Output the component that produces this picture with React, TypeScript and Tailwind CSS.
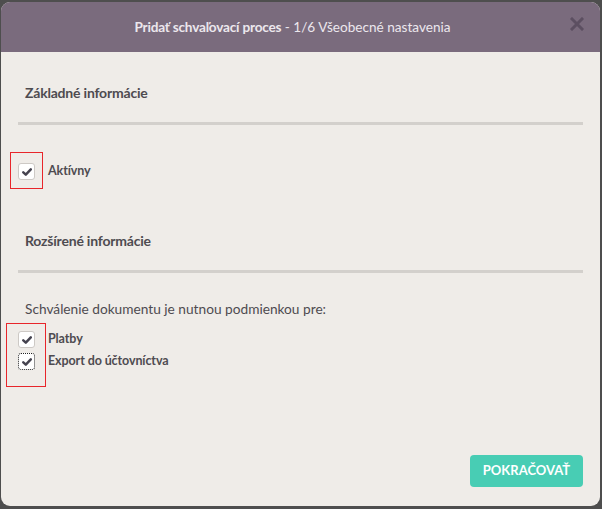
import React from "react";

function Check({ focused = false }: { focused?: boolean }) {
  return (
    <div
      className={
        "w-[17px] h-[17px] bg-white rounded-[3px] flex items-center justify-center shrink-0 " +
        (focused ? "border border-dotted border-[#222]" : "border border-[#cdc9c5]")
      }
    >
      <svg width="10" height="8" viewBox="0 0 10 8">
        <path d="M1.3 4.3 L3.8 6.6 L8.8 1.4" fill="none" stroke="#45434f" strokeWidth="2.5" strokeLinecap="round" strokeLinejoin="round" />
      </svg>
    </div>
  );
}

export default function App() {
  const font = { fontFamily: "Lato, 'Noto Sans', sans-serif" };
  return (
    <div className="w-[602px] h-[509px] bg-[#4e4e4e] pt-[2px] pl-[1px] pr-[2px] pb-[3px]" style={font}>
      <div className="w-full h-full rounded-[9px] overflow-hidden bg-[#efece8] flex flex-col">
        <div className="h-[50px] bg-[#7a6b7d] flex items-center justify-center relative shrink-0 pr-[16px]">
          <div className="text-[13.6px] text-[#ece7ed] leading-[20px]">
            <span className="font-bold tracking-[-0.2px]">Pridať schvaľovací proces</span>
            <span> - 1/6 Všeobecné nastavenia</span>
          </div>
          <div className="absolute right-[16px] top-[15px] text-[#5c4f61]">
            <svg width="14" height="14" viewBox="0 0 14 14">
              <path d="M2 2 L12 12 M12 2 L2 12" stroke="#5c4f61" strokeWidth="3" strokeLinecap="square" />
            </svg>
          </div>
        </div>
        <div className="flex-1 flex flex-col px-[17px] text-[#4e4b50]">
          <div className="mt-[31px] pl-[7px] h-[20px] leading-[20px] text-[14px] font-bold tracking-[-0.2px]">Základné informácie</div>
          <div className="mt-[19px] h-[3px] bg-[#d3d0cc]" />
          <div className="relative mt-[38px] flex items-center h-[17px]">
            <div className="absolute left-[-8px] top-[-11px] w-[33px] h-[37px] border border-[#e8262b]" />
            <Check />
            <span className="ml-[13px] text-[12.5px] font-bold tracking-[-0.1px]">Aktívny</span>
          </div>
          <div className="mt-[51px] pl-[7px] h-[20px] leading-[20px] text-[14px] font-bold tracking-[-0.2px]">Rozšírené informácie</div>
          <div className="mt-[19px] h-[3px] bg-[#d3d0cc]" />
          <div className="mt-[26px] pl-[7px] h-[20px] leading-[20px] text-[13.7px]">Schválenie dokumentu je nutnou podmienkou pre:</div>
          <div className="relative mt-[12px] flex flex-col gap-[5px]">
            <div className="absolute left-[-12px] top-[-8px] w-[40px] h-[64px] border border-[#e8262b]" />
            <div className="flex items-center h-[17px]">
              <Check />
              <span className="ml-[13px] text-[12.5px] font-bold tracking-[-0.1px]">Platby</span>
            </div>
            <div className="flex items-center h-[17px]">
              <Check focused />
              <span className="ml-[13px] text-[12.5px] font-bold tracking-[-0.1px]">Export do účtovníctva</span>
            </div>
          </div>
          <div className="mt-auto mb-[19px] flex justify-end">
            <button className="w-[113px] h-[32px] rounded-[4px] bg-[#48cdb4] text-white text-[13px] font-bold">
              POKRAČOVAŤ
            </button>
          </div>
        </div>
      </div>
    </div>
  );
}
